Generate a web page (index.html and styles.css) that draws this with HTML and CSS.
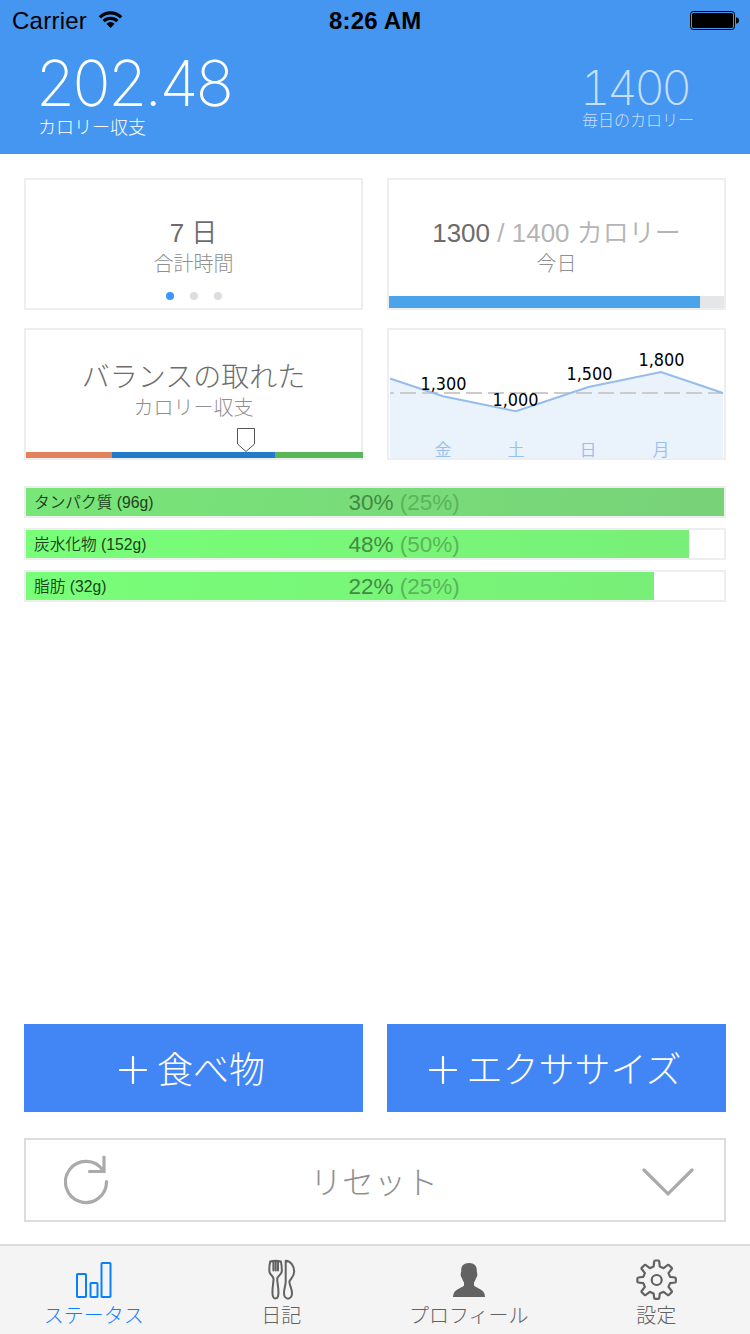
FILE: index.html
```html
<!DOCTYPE html>
<html lang="ja">
<head>
<meta charset="utf-8">
<title>ステータス</title>
<link rel="stylesheet" href="styles.css">
</head>
<body>
<div class="app">
  <header class="header">
    <div class="statusbar">
      <div class="carrier"><span>Carrier</span>
        <svg class="wifi" width="25" height="19" viewBox="0 0 25 19"><path d="M.7 6.2A16.6 16.6 0 0 1 24.3 6.2L22 8.5A13.4 13.4 0 0 0 3 8.5Z"/><path d="M4.5 10A11.3 11.3 0 0 1 20.5 10L18.2 12.3A8.1 8.1 0 0 0 6.8 12.3Z"/><path d="M8.3 13.8A6 6 0 0 1 16.7 13.8L12.5 18Z"/></svg>
      </div>
      <div class="clock">8:26 AM</div>
      <svg class="battery" width="50" height="20" viewBox="0 0 50 20"><rect x=".5" y=".5" width="44" height="18" rx="2.8" fill="none" stroke="#000"/><rect x="2" y="2" width="41" height="15" rx="1.6"/><path d="M46 6.2q3 .6 3 3.3t-3 3.3z"/></svg>
    </div>
    <div class="totals">
      <div class="balance"><div class="balance-value">202.48</div><div class="balance-label">カロリー収支</div></div>
      <div class="goal"><div class="goal-value">1400</div><div class="goal-label">毎日のカロリー</div></div>
    </div>
  </header>

  <main class="content">
    <section class="cards">
      <article class="card">
        <div class="card-title">7 日</div>
        <div class="card-sub">合計時間</div>
        <div class="dots"><i class="dot dot-on"></i><i class="dot"></i><i class="dot"></i></div>
      </article>
      <article class="card">
        <div class="card-title">1300 <span class="muted">/ 1400 カロリー</span></div>
        <div class="card-sub">今日</div>
        <div class="progress"><div class="progress-fill"></div></div>
      </article>
      <article class="card card-balance">
        <div class="card-title card-title-lg">バランスの取れた</div>
        <div class="card-sub">カロリー収支</div>
        <svg class="marker" width="18" height="24" viewBox="0 0 18 24"><path d="M.5.5H17.5V16L9 23.5.5 16Z" fill="#fff" stroke="#555"/></svg>
        <div class="scale"><i class="low"></i><i class="mid"></i><i class="high"></i></div>
      </article>
      <article class="card">
        <svg class="chart" width="335" height="128" viewBox="0 0 335 128">
          <path d="M1 48.5 54 66.3 127 81.3 199.5 57 272 42 334 63V128H1Z" fill="#eaf2fc"/>
          <path d="M1 63H334" stroke="#ccc" stroke-width="2" stroke-dasharray="16 6" stroke-dashoffset="12"/>
          <path d="M1 48.5 54 66.3 127 81.3 199.5 57 272 42 334 63" fill="none" stroke="#94bdec" stroke-width="2"/>
          <g class="chart-values"><text x="31.5" y="60" textLength="46" lengthAdjust="spacingAndGlyphs">1,300</text><text x="103.5" y="76" textLength="46" lengthAdjust="spacingAndGlyphs">1,000</text><text x="177.5" y="50" textLength="46" lengthAdjust="spacingAndGlyphs">1,500</text><text x="249.5" y="36" textLength="46" lengthAdjust="spacingAndGlyphs">1,800</text></g>
          <g class="chart-days"><text x="54" y="126">金</text><text x="127" y="126">土</text><text x="199" y="126">日</text><text x="272" y="126">月</text></g>
        </svg>
      </article>
    </section>

    <section class="nutrients">
      <div class="nutrient"><div class="fill fill-over" style="width:100%"></div><span class="name">タンパク質 (96g)</span><span class="share">30% <span class="target">(25%)</span></span></div>
      <div class="nutrient"><div class="fill" style="width:95%"></div><span class="name">炭水化物 (152g)</span><span class="share">48% <span class="target">(50%)</span></span></div>
      <div class="nutrient"><div class="fill" style="width:90%"></div><span class="name">脂肪 (32g)</span><span class="share">22% <span class="target">(25%)</span></span></div>
    </section>

    <section class="actions">
      <div class="buttons">
        <div class="button"><svg width="28" height="28" viewBox="0 0 28 28"><path d="M1 14H27M14 1V27"/></svg><span>食べ物</span></div>
        <div class="button"><svg width="28" height="28" viewBox="0 0 28 28"><path d="M1 14H27M14 1V27"/></svg><span>エクササイズ</span></div>
      </div>
      <div class="reset">
        <svg width="46" height="50" viewBox="0 0 46 50"><path d="M42.5 26.5A20.5 20.5 0 1 1 39 15.5M40 2V16.5H25.5"/></svg>
        <span>リセット</span>
        <svg class="chevron" width="52" height="28" viewBox="0 0 52 28"><path d="M2 2 26 25.8 50 2"/></svg>
      </div>
    </section>
  </main>

  <nav class="tabs">
    <div class="tab tab-on">
      <svg width="42" height="42" viewBox="0 0 42 42"><g fill="none" stroke="currentColor" stroke-width="2"><rect x="4" y="16" width="9" height="23" rx=".7"/><rect x="17.5" y="25" width="7" height="14" rx=".7"/><rect x="28.5" y="5" width="9" height="34" rx=".7"/></g></svg>
      <span>ステータス</span>
    </div>
    <div class="tab">
      <svg width="42" height="42" viewBox="-.7 -.5 42 42"><g fill="none" stroke="currentColor" stroke-width="2" stroke-linejoin="round" stroke-linecap="round"><path d="M9.5 3Q8.2 9 8.8 13.5C9.2 16.5 12.8 17.3 12.8 20.5C12.8 25 11.5 29 11.8 35C12 41.5 17.5 41.5 17.7 35C18 29 16.5 25 16.5 20.5C16.5 17.3 20.5 16.5 21 13.5Q21.5 9 20.2 3Q15 1.5 9.5 3ZM12.7 3.3V12M15 3.3V12M17.3 3.3V12"/><path d="M25 2.3V22.5C25 27 23.3 30 23.3 34.5C23.3 42 31.3 42 31.3 34.5C31.3 30 28.7 27 28.7 23C30 20 33.5 18 33.5 13C33.5 7.5 30 2.5 25 2.3Z"/></g></svg>
      <span>日記</span>
    </div>
    <div class="tab">
      <svg width="42" height="42" viewBox="0 0 42 42"><path fill="currentColor" d="M21 5C26.5 5 29 8 28.8 13C28.7 14.5 29.5 14.5 29.3 17C29.1 19 28.5 19.2 28 20.2C27.5 22 26.5 23.5 26 24.5V27.5C28 30.500 37 30.5 37 39H5C5 30.5 14 30.5 16 27.5V24.5C15.5 23.5 14.5 22 14 20.2C13.5 19.2 12.9 19 12.7 17C12.5 14.5 13.3 14.5 13.2 13C13 8 15.5 5 21 5Z"/></svg>
      <span>プロフィール</span>
    </div>
    <div class="tab">
      <svg width="42" height="42" viewBox="-.7 0 42 42"><g fill="none" stroke="currentColor" stroke-width="2.2" stroke-linejoin="round"><circle cx="21" cy="22" r="5"/><path d="M18.5 3.5Q18.6 2.5 19.5 2.5H22.5Q23.4 2.5 23.5 3.5L24.1 8.6L27.9 10.2L32 7Q32.7 6.5 33.4 7.2L35.8 9.6Q36.5 10.3 36 11L32.8 15.1L34.4 18.9L39.5 19.5Q40.1 19.6 40.1 20.5V23.5Q40.1 24.4 39.5 24.5L34.4 25.1L32.8 28.9L36 33Q36.5 33.7 35.8 34.4L33.4 36.8Q32.7 37.5 32 37L27.9 33.8L24.1 35.4L23.5 40.1Q23.4 40.8 22.5 40.8H19.5Q18.6 40.8 18.5 40.1L17.9 35.4L14.1 33.8L10 37Q9.3 37.5 8.6 36.8L6.2 34.4Q5.5 33.7 6 33L9.2 28.9L7.6 25.1L2.5 24.5Q1.7 24.4 1.7 23.5V20.5Q1.7 19.6 2.5 19.5L7.6 18.9L9.2 15.1L6 11Q5.5 10.3 6.2 9.6L8.6 7.2Q9.3 6.5 10 7L14.1 10.2L17.9 8.6Z"/></g></svg>
      <span>設定</span>
    </div>
  </nav>
</div>
</body>
</html>
```
FILE: styles.css
```css
* { box-sizing: border-box; }
body { margin: 0; background: #fff; font-family: "Liberation Sans", "Noto Sans CJK JP", sans-serif; font-weight: 300; }
svg { display: block; flex: none; }
.app { width: 750px; height: 1334px; display: flex; flex-direction: column; overflow: hidden; }

.header { height: 154px; background: #4596f1; color: #fff; }
.statusbar { height: 40px; padding: 0 10px 0 12px; display: grid; grid-template-columns: 1fr 94px 1fr; align-items: center; color: #000; font-size: 24px; line-height: 38px; }
.carrier { display: flex; align-items: center; gap: 11px; letter-spacing: .25px; }
.wifi { margin-top: -2px; }
.carrier span { padding-top: 2px; }
.clock { padding-top: 2px; font-weight: 700; letter-spacing: .2px; white-space: nowrap; }
.battery { justify-self: end; margin-top: 1px; }
.totals { display: flex; justify-content: space-between; padding: 0 56px 0 38px; }
.balance-value { font: 250 63px/64px Inter, sans-serif; letter-spacing: -2.4px; margin: 11px 0 0 -2px; }
.balance-label { font-size: 18px; line-height: 26px; }
.goal { color: #c7dffb; padding-top: 24px; }
.goal-value { font: 250 47.500px/48px Inter, sans-serif; font-feature-settings: "tnum"; letter-spacing: -3.6px; margin-left: -2px; }
.goal-label { font-size: 16px; line-height: 18px; }

.content { flex: 1; padding: 24px 24px 22px; display: flex; flex-direction: column; }
.cards { display: grid; grid-template-columns: 339px 339px; gap: 18px 24px; }
.card { height: 132px; border: 2px solid #eee; display: flex; flex-direction: column; align-items: center; padding-top: 38px; color: #6c6c6c; }
.card:last-child { padding: 0; }
.card-title { font-size: 26px; font-weight: 350; line-height: 31px; white-space: pre; }
.card-title-lg { font-size: 28px; font-weight: 300; }
.card-balance { padding-top: 32px; }
.muted { color: #b4b4b4; }
.card-sub { font-size: 20px; line-height: 30px; color: #8f8f8f; }
.dots { display: flex; gap: 16px; margin-top: 13px; }
.dot { width: 8px; height: 8px; border-radius: 50%; background: #ddd; }
.dot-on { background: #3797fb; }
.progress { width: 335px; height: 12px; margin-top: 17px; background: #e3e7ea; }
.progress-fill { width: 311px; height: 12px; background: #4ba3e9; }
.marker { margin: 5px 0 0 104px; }
.scale { display: flex; width: 337px; height: 6px; align-self: flex-start; }
.low { width: 86px; background: #e3815d; }
.mid { width: 163px; background: #217bca; }
.high { width: 88px; background: #58b757; }
.chart { overflow: visible; }
.chart-values { font: 400 17px "DejaVu Sans", sans-serif; fill: #000; }
.chart-days { font-size: 17px; font-weight: 350; text-anchor: middle; fill: #96c0f0; }

.nutrients { display: grid; gap: 10px; margin-top: 26px; }
.nutrient { height: 32px; border: 2px solid #eee; display: grid; grid-template-columns: 322px 1fr; align-items: center; }
.nutrient > * { grid-row: 1; }
.fill { grid-column: 1 / 3; height: 28px; background: linear-gradient(100deg, #78ff78, #78ef78); }
.fill-over { background: linear-gradient(100deg, #78e678, #78d278); }
.name { grid-column: 1; padding: 2px 0 0 8px; font-size: 15.700px; font-weight: 350; line-height: 26px; color: #1e401e; }
.share { grid-column: 2; padding: 2px 0 0 .5px; font-size: 22.500px; line-height: 26px; color: #438b43; }
.target { color: #5ab45a; }

.actions { margin-top: auto; display: grid; gap: 26px; }
.buttons { display: grid; grid-template-columns: 339px 339px; gap: 24px; }
.button { height: 88px; background: #4285f5; color: #fff; display: flex; align-items: center; justify-content: center; gap: 10px; padding-right: 3px; font-size: 36px; line-height: 40px; }
.button span { padding-top: 6px; }
.button path { stroke: #fff; stroke-width: 2.200; stroke-linecap: round; }
.button svg { margin-top: 4px; }
.reset { height: 84px; border: 2px solid #dcdcdc; display: flex; align-items: center; justify-content: space-between; padding: 0 30px 0 38px; color: #8f8f8f; font-size: 32px; line-height: 40px; }
.reset span { padding: 6px 4px 0 0; }
.reset path { fill: none; stroke: #aaa; stroke-width: 3.200; stroke-linecap: round; }
.chevron { margin-top: 4px; }

.tabs { height: 90px; border-top: 2px solid #dcdcdc; background: #f4f4f4; display: grid; grid-template-columns: repeat(4, 1fr); color: #626262; font-size: 20px; line-height: 26px; }
.tab { display: flex; flex-direction: column; align-items: center; padding-top: 12px; }
.tab span { padding-top: 3px; }
.tab-on { color: #087fff; }
```
